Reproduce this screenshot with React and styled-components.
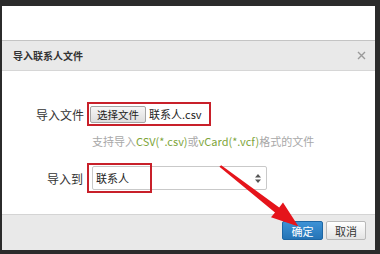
import React from "react";
import styled, { createGlobalStyle } from "styled-components";

const Global = createGlobalStyle`
  html, body { margin: 0; padding: 0; background: #2b2b2b; }
  body { font-family: "Noto Sans CJK SC", "Noto Sans", sans-serif; }
`;

const Frame = styled.div`
  position: relative;
  width: 380px;
  height: 254px;
  box-sizing: border-box;
  padding: 6px 5px 4px 2px;
  background: #2b2b2b;
`;

const Screen = styled.div`
  height: 100%;
  display: flex;
  flex-direction: column;
  background: #fff;
`;

const Backdrop = styled.div`
  height: 34px;
  background: #fff;
`;

const Header = styled.div`
  height: 29px;
  border-top: 1px solid #c4c4c4;
  border-bottom: 1px solid #d6d6d6;
  background: #e9e9e9;
  display: flex;
  align-items: center;
  justify-content: space-between;
  padding: 0 9px 0 11px;
`;

const Title = styled.div`
  font-size: 10px;
  font-weight: 700;
  color: #333;
`;

const Close = styled.svg`
  width: 9px;
  height: 9px;
  display: block;
`;

const Body = styled.div`
  flex: 1;
  display: grid;
  grid-template-columns: 82px 1fr;
  column-gap: 3px;
  align-content: start;
  padding-top: 31px;
`;

const Label = styled.div`
  font-size: 12px;
  color: #333;
  text-align: right;
  align-self: center;
  padding-right: ${(p) => p.$pr || 0}px;
`;

const FileBox = styled.div`
  width: 124px;
  height: 24px;
  box-sizing: border-box;
  border: 2px solid #c8202a;
  display: flex;
  align-items: center;
  padding-left: 1px;
  gap: 3px;
`;

const FileButton = styled.div`
  width: 56px;
  height: 17px;
  box-sizing: border-box;
  border: 1px solid #a5a5a5;
  border-radius: 2px;
  background: linear-gradient(#f6f6f6, #dedede);
  font-size: 10.5px;
  color: #222;
  display: flex;
  align-items: center;
  justify-content: center;
`;

const FileName = styled.span`
  font-size: 11px;
  color: #222;
`;

const Hint = styled.div`
  grid-column: 2;
  margin: 8px 0 0 5px;
  font-size: 11px;
  line-height: 14px;
  color: #a8a8a8;
  white-space: nowrap;
  height: 32px;
`;

const Green = styled.span`
  color: #7ea53a;
`;

const SelectWrap = styled.div`
  position: relative;
  margin-left: 5px;
  width: 175px;
  height: 24px;
`;

const Select = styled.div`
  height: 100%;
  box-sizing: border-box;
  border: 1px solid #c9c9c9;
  border-radius: 2px;
  background: #fff;
  display: flex;
  align-items: center;
  justify-content: space-between;
  padding: 0 5px 0 3px;
  font-size: 11px;
  color: #222;
`;

const Mark = styled.div`
  position: absolute;
  left: -5px;
  top: -3px;
  width: 65px;
  height: 30px;
  box-sizing: border-box;
  border: 2px solid #c8202a;
  pointer-events: none;
`;

const Footer = styled.div`
  height: 29px;
  border-top: 1px solid #d4d4d4;
  background: #e9e9e9;
  display: flex;
  justify-content: flex-end;
  align-items: flex-start;
  gap: 3px;
  padding: 6px 9px 0 0;
`;

const Button = styled.div`
  width: ${(p) => p.$w}px;
  height: 19px;
  box-sizing: border-box;
  border-radius: 2px;
  border: 1px solid ${(p) => (p.$primary ? "#1d66a4" : "#b9b9b9")};
  background: ${(p) =>
    p.$primary
      ? "linear-gradient(#3d92d6, #2574b6)"
      : "linear-gradient(#ffffff, #e4e4e4)"};
  color: ${(p) => (p.$primary ? "#fff" : "#333")};
  font-size: 11px;
  display: flex;
  align-items: center;
  justify-content: center;
`;

const Arrow = styled.svg`
  position: absolute;
  left: 0;
  top: 0;
  width: 380px;
  height: 254px;
  pointer-events: none;
`;

export default function App() {
  return (
    <>
      <Global />
      <Frame>
        <Screen>
          <Backdrop />
          <Header>
            <Title>导入联系人文件</Title>
            <Close viewBox="0 0 9 9">
              <path d="M1 1L8 8M8 1L1 8" stroke="#9a9a9a" strokeWidth="1.4" />
            </Close>
          </Header>
          <Body>
            <Label>导入文件</Label>
            <FileBox>
              <FileButton>选择文件</FileButton>
              <FileName>联系人.csv</FileName>
            </FileBox>
            <Hint>
              支持导入<Green>CSV(*.csv)</Green>或<Green>vCard(*.vcf)</Green>格式的文件
            </Hint>
            <Label $pr={1}>导入到</Label>
            <SelectWrap>
              <Select>
                <span>联系人</span>
                <svg width="6" height="9" viewBox="0 0 6 9">
                  <path d="M3 0L6 3.5H0Z M3 9L6 5.5H0Z" fill="#555" />
                </svg>
              </Select>
              <Mark />
            </SelectWrap>
          </Body>
          <Footer>
            <Button $primary $w={41}>确定</Button>
            <Button $w={40}>取消</Button>
          </Footer>
        </Screen>
        <Arrow viewBox="0 0 380 254">
          <polygon
            points="221.2,165.2 279.2,207.6 283,202.6 298.5,226.5 271,217.2 275,212.4 219.4,166.8"
            fill="#e5141b"
          />
        </Arrow>
      </Frame>
    </>
  );
}
